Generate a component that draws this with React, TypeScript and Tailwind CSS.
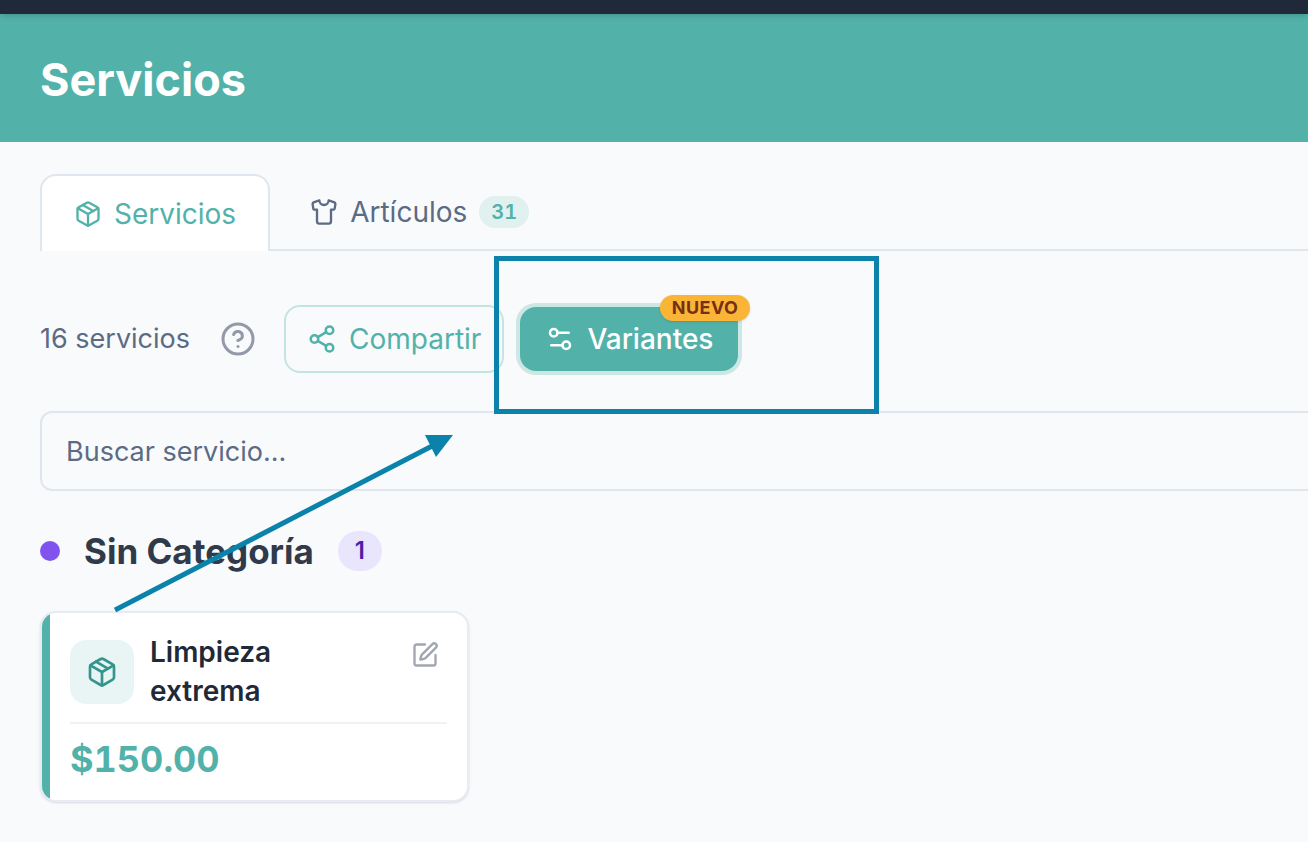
import React from "react";
import { CircleHelp, Package, Settings2, Share2, Shirt, SquarePen } from "lucide-react";

export default function App() {
  return (
    <div className="relative min-h-screen overflow-hidden bg-[#f8fafc] font-[Inter,sans-serif] text-[#1f2937]">
      <div className="relative z-10 h-3.5 bg-[#1f2937] shadow-md" />
      <header className="flex h-32 items-center bg-[#52b2aa] px-10 pt-1">
        <h1 className="text-[45px] font-bold text-white">Servicios</h1>
      </header>

      <main className="pt-8 pl-10">
        <nav className="flex text-[28px]" aria-label="Secciones">
          <button type="button" className="flex h-[77px] items-center gap-3 rounded-t-2xl border-2 border-b-0 border-[#dfe6ee] bg-white px-8 text-[#52b2aa]">
            <Package className="size-7" aria-hidden="true" />
            Servicios
          </button>
          <div className="flex h-[77px] flex-1 border-b-2 border-[#dfe6ee]">
            <button type="button" className="flex items-center gap-3 px-10 text-[#5b6b84]">
              <Shirt className="size-7" aria-hidden="true" />
              Artículos
              <span className="flex h-8 items-center rounded-full bg-[#e1f1ef] px-3 text-xl font-semibold text-[#52b2aa] tabular-nums">31</span>
            </button>
          </div>
        </nav>

        <div className="mt-[54px] flex items-center text-[28px]">
          <p className="text-[27px] text-[#5b6b84]">16 servicios</p>
          <button type="button" aria-label="Ayuda" className="ml-[30px] text-[#9299a8]">
            <CircleHelp className="size-9" aria-hidden="true" />
          </button>
          <button type="button" className="ml-7 flex h-[68px] items-center gap-3 rounded-2xl border-2 border-[#c3e5e2] px-[21px] text-[#52b2aa]">
            <Share2 className="size-[30px]" aria-hidden="true" />
            Compartir
          </button>
          <button type="button" className="relative ml-4 flex h-16 items-center gap-3 rounded-2xl bg-[#52b2aa] px-[25px] font-medium text-white ring-4 ring-[#cde7e5]">
            <Settings2 className="size-[30px]" aria-hidden="true" />
            Variantes
            <span className="absolute -top-3 -right-3 flex h-[26px] items-center rounded-full bg-[#fab537] px-3 text-lg font-bold tracking-wide text-[#782f14] shadow-sm">NUEVO</span>
          </button>
        </div>

        <input
          type="search"
          aria-label="Buscar servicio"
          placeholder="Buscar servicio..."
          className="mt-[38px] block h-20 w-[calc(100%+16px)] rounded-xl border-2 border-[#dfe6ee] bg-transparent px-6 text-[27px] placeholder:text-[#5b6b84]"
        />

        <section>
          <div className="mt-10 flex h-10 items-center gap-6">
            <span className="size-5 rounded-full bg-[#8052ee]" />
            <h2 className="text-[35px] font-bold text-[#303a4b]">Sin Categoría</h2>
            <span className="flex h-10 w-11 items-center justify-center rounded-full bg-[#e9e5fd] text-2xl font-semibold text-[#4f1fa8]">1</span>
          </div>

          <article className="mt-10 flex w-[429px] overflow-hidden rounded-2xl border-2 border-[#e7ebf3] bg-white shadow-sm">
            <div className="w-2 shrink-0 bg-[#52b2aa]" />
            <div className="flex-1 px-5 pt-5 pb-[21px]">
              <div className="flex items-center border-b-2 border-[#eff2f7] pb-[11px]">
                <div className="flex size-16 shrink-0 items-center justify-center rounded-2xl bg-[#e9f5f5] text-[#33958c]">
                  <Package className="size-8" aria-hidden="true" />
                </div>
                <h3 className="ml-4 w-40 text-[28px] leading-[39px] font-semibold">Limpieza extrema</h3>
                <button type="button" aria-label="Editar" className="mt-2 mr-2 ml-auto self-start text-[#a1a6b0]">
                  <SquarePen className="size-7" aria-hidden="true" />
                </button>
              </div>
              <p className="mt-[15px] text-4xl font-bold text-[#52b2aa] tabular-nums">$150.00</p>
            </div>
          </article>
        </section>
      </main>

      <div className="pointer-events-none absolute top-64 left-[494px] h-[158px] w-[385px] border-5 border-[#0a82aa]" />
      <svg viewBox="0 0 340 180" className="pointer-events-none absolute top-[434px] left-[114px] w-[340px]" aria-hidden="true">
        <path d="M1 176 322 10" stroke="#0a82aa" strokeWidth="5" />
        <path d="M311 1h28l-17 22z" fill="#0a82aa" />
      </svg>
    </div>
  );
}
